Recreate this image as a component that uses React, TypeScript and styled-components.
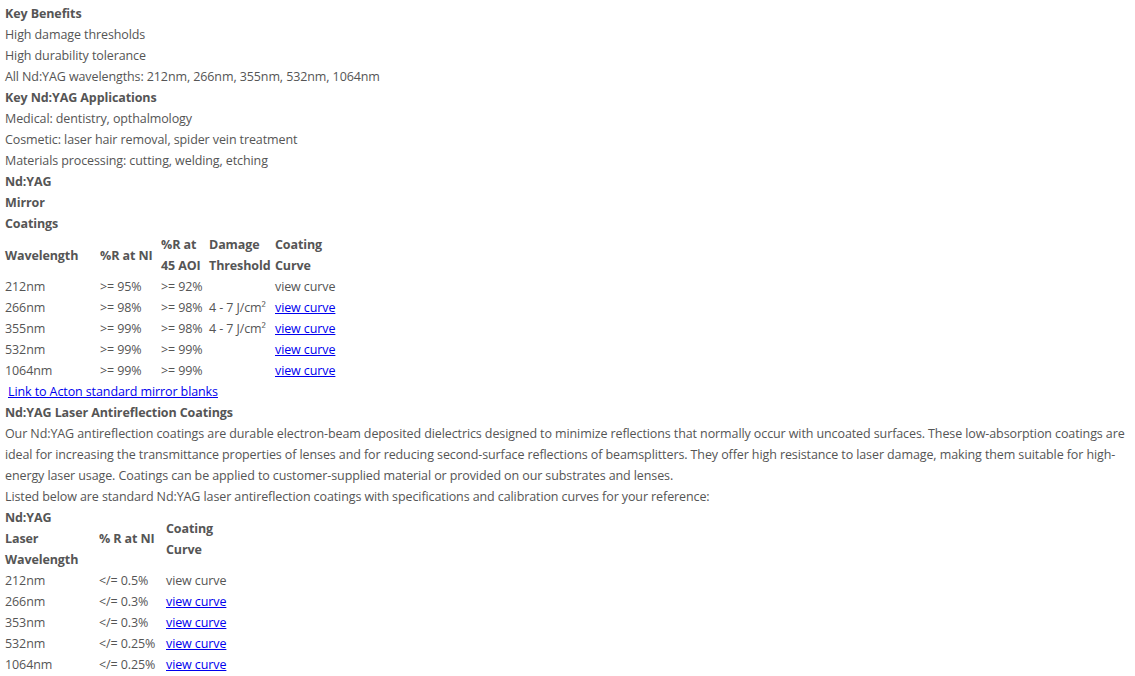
import React from "react";
import styled, { createGlobalStyle } from "styled-components";

const GlobalStyle = createGlobalStyle`
    body {
        margin: 0;
        background: #ffffff;
    }
`;

const Page = styled.div`
    padding: 3px 2px 0 5px;
    font-family: "Open Sans", "Noto Sans", Arial, sans-serif;
    font-size: 12.5px;
    letter-spacing: -0.1px;
    line-height: 21px;
    color: #555555;
`;

const Line = styled.div`
    margin: 0;
`;

const Heading = styled.div`
    font-weight: bold;
`;

const Para = styled.p`
    margin: 0;
`;

const Table = styled.table`
    border-collapse: collapse;
    border-spacing: 0;
    table-layout: fixed;
`;

const Cell = styled.td<{ $w?: number }>`
    padding: 0;
    vertical-align: middle;
    white-space: nowrap;
    width: ${(p) => (p.$w ? `${p.$w}px` : "auto")};
`;

const HeadCell = styled.th<{ $w?: number; $gap?: number }>`
    padding: 0 ${(p) => p.$gap ?? 0}px 0 0;
    text-align: left;
    vertical-align: middle;
    font-weight: bold;
    width: ${(p) => (p.$w ? `${p.$w}px` : "auto")};
`;

const CurveLink = styled.a`
    color: #0000ee;
    text-decoration: underline;
`;

const BlankLink = styled.a`
    display: inline-block;
    margin-left: 3px;
    color: #0000ee;
    text-decoration: underline;
`;

type MirrorRow = { wl: string; ni: string; aoi: string; dmg: string; link: boolean };

const mirrorRows: MirrorRow[] = [
    { wl: "212nm", ni: ">= 95%", aoi: ">= 92%", dmg: "", link: false },
    { wl: "266nm", ni: ">= 98%", aoi: ">= 98%", dmg: "4 - 7 J/cm²", link: true },
    { wl: "355nm", ni: ">= 99%", aoi: ">= 98%", dmg: "4 - 7 J/cm²", link: true },
    { wl: "532nm", ni: ">= 99%", aoi: ">= 99%", dmg: "", link: true },
    { wl: "1064nm", ni: ">= 99%", aoi: ">= 99%", dmg: "", link: true },
];

const arRows = [
    { wl: "212nm", r: "</= 0.5%", link: false },
    { wl: "266nm", r: "</= 0.3%", link: true },
    { wl: "353nm", r: "</= 0.3%", link: true },
    { wl: "532nm", r: "</= 0.25%", link: true },
    { wl: "1064nm", r: "</= 0.25%", link: true },
];

const Curve = ({ link }: { link: boolean }) =>
    link ? <CurveLink href="#">view curve</CurveLink> : <span>view curve</span>;

export default function App() {
    return (
        <Page>
            <GlobalStyle />
            <Heading>Key Benefits</Heading>
            <Line>High damage thresholds</Line>
            <Line>High durability tolerance</Line>
            <Line>All Nd:YAG wavelengths: 212nm, 266nm, 355nm, 532nm, 1064nm</Line>
            <Heading>Key Nd:YAG Applications</Heading>
            <Line>Medical: dentistry, opthalmology</Line>
            <Line>Cosmetic: laser hair removal, spider vein treatment</Line>
            <Line>Materials processing: cutting, welding, etching</Line>
            <Heading>Nd:YAG</Heading>
            <Heading>Mirror</Heading>
            <Heading>Coatings</Heading>

            <Table>
                <thead>
                    <tr>
                        <HeadCell $w={95}>Wavelength</HeadCell>
                        <HeadCell $w={61}>%R at NI</HeadCell>
                        <HeadCell $w={48}>%R at 45 AOI</HeadCell>
                        <HeadCell $w={66}>Damage Threshold</HeadCell>
                        <HeadCell $w={62}>Coating Curve</HeadCell>
                    </tr>
                </thead>
                <tbody>
                    {mirrorRows.map((r) => (
                        <tr key={r.wl}>
                            <Cell>{r.wl}</Cell>
                            <Cell>{r.ni}</Cell>
                            <Cell>{r.aoi}</Cell>
                            <Cell>{r.dmg}</Cell>
                            <Cell><Curve link={r.link} /></Cell>
                        </tr>
                    ))}
                </tbody>
            </Table>

            <BlankLink href="#">Link to Acton standard mirror blanks</BlankLink>
            <Heading>Nd:YAG Laser Antireflection Coatings</Heading>
            <Para>
                Our Nd:YAG antireflection coatings are durable electron-beam deposited dielectrics designed to
                minimize reflections that normally occur with uncoated surfaces. These low-absorption coatings are
                ideal for increasing the transmittance properties of lenses and for reducing second-surface
                reflections of beamsplitters. They offer high resistance to laser damage, making them suitable for
                high-energy laser usage. Coatings can be applied to customer-supplied material or provided on our
                substrates and lenses.
            </Para>
            <Para>
                Listed below are standard Nd:YAG laser antireflection coatings with specifications and calibration
                curves for your reference:
            </Para>

            <Table>
                <thead>
                    <tr>
                        <HeadCell $w={80} $gap={14}>Nd:YAG Laser Wavelength</HeadCell>
                        <HeadCell $w={67}>% R at NI</HeadCell>
                        <HeadCell $w={62}>Coating Curve</HeadCell>
                    </tr>
                </thead>
                <tbody>
                    {arRows.map((r) => (
                        <tr key={r.wl}>
                            <Cell>{r.wl}</Cell>
                            <Cell>{r.r}</Cell>
                            <Cell><Curve link={r.link} /></Cell>
                        </tr>
                    ))}
                </tbody>
            </Table>
        </Page>
    );
}
